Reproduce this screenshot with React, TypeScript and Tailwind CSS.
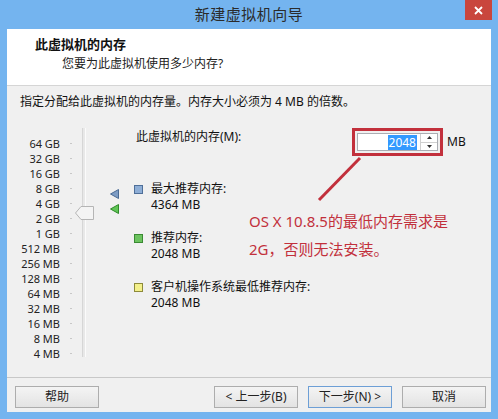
import React from "react";

const sizes = [
  "64 GB", "32 GB", "16 GB", "8 GB", "4 GB", "2 GB", "1 GB",
  "512 MB", "256 MB", "128 MB", "64 MB", "32 MB", "16 MB", "8 MB", "4 MB",
];

function Btn({ label, primary }: { label: string; primary?: boolean }) {
  return (
    <button
      className={`h-[22px] w-[84px] text-[12px] text-[#222] bg-gradient-to-b from-[#f4f4f4] to-[#e3e3e3] border ${
        primary ? "border-[#6d9fd6]" : "border-[#adadad]"
      }`}
    >
      {label}
    </button>
  );
}

export default function App() {
  return (
    <div
      className="w-[498px] h-[419px] bg-[#74b4ef] flex flex-col overflow-hidden"
      style={{ fontFamily: '"Noto Sans", "Noto Sans CJK SC", sans-serif' }}
    >
      {/* title bar */}
      <div className="relative h-[29px] flex items-center justify-center">
        <span className="text-[15px] text-[#2b2b2b] tracking-[0.5px]">新建虚拟机向导</span>
        <div className="absolute right-[6px] top-0 w-[27px] h-[20px] bg-[#c9463d] flex items-center justify-center">
          <svg width="9" height="9" viewBox="0 0 9 9">
            <path d="M1 1L8 8M8 1L1 8" stroke="#fff" strokeWidth="1.8" />
          </svg>
        </div>
      </div>

      <div className="mx-[7px] mb-[7px] flex-1 flex flex-col bg-[#f0f0f0]">
        {/* header */}
        <div className="h-[57px] bg-white border-b border-[#d5d5d5] pl-[28px] pt-[6px]">
          <div className="text-[13px] font-bold text-[#111] leading-[18px]">此虚拟机的内存</div>
          <div className="text-[12px] text-[#222] leading-[18px] pl-[27px] pt-[2px]">您要为此虚拟机使用多少内存?</div>
        </div>

        {/* body */}
        <div className="relative flex-1 flex flex-col">
          <div className="pl-[13px] pt-[7px] text-[12px] text-[#111] leading-[18px]">
            指定分配给此虚拟机的内存量。内存大小必须为 4 MB 的倍数。
          </div>

          <div className="flex mt-[17px]">
            {/* slider */}
            <div className="relative flex">
              <div className="w-[53px] flex flex-col pt-[8px]">
                {sizes.map((s) => (
                  <div key={s} className="h-[15px] leading-[15px] text-right text-[11px] text-[#222] whitespace-nowrap">
                    {s}
                  </div>
                ))}
              </div>
              <div className="w-[12px] flex flex-col pt-[8px]">
                {sizes.map((s) => (
                  <div key={s} className="h-[15px] flex items-center justify-end">
                    <div className="w-[2px] h-px bg-[#c8c8c8]" />
                  </div>
                ))}
              </div>
              <div className="ml-[10px] w-[4px] h-[229px] border-l border-[#d6d6d6] border-r border-r-[#fbfbfb] bg-[#e8e8e8]" />
              {/* thumb */}
              <svg className="absolute left-[68px] top-[78px]" width="19" height="14" viewBox="0 0 19 14">
                <path d="M0.5 7L6 0.5H18.5V13.5H6Z" fill="#f4f4f4" stroke="#b5b5b5" />
              </svg>
            </div>

            {/* markers */}
            <div className="relative w-[48px]">
              <svg className="absolute left-[24px] top-[61px]" width="9" height="10" viewBox="0 0 9 10">
                <path d="M0.5 5L8.5 0.5V9.5Z" fill="#7d9cc4" stroke="#4a6b94" />
              </svg>
              <svg className="absolute left-[24px] top-[76px]" width="9" height="10" viewBox="0 0 9 10">
                <path d="M0.5 5L8.5 0.5V9.5Z" fill="#5fc455" stroke="#2f8a2a" />
              </svg>
            </div>

            {/* info */}
            <div className="flex flex-col text-[12px] text-[#111]">
              <div className="pl-[2px] leading-[16px] pt-[1px]">此虚拟机的内存(M):</div>
              <div className="mt-[36px] flex flex-col gap-[17px]">
                {[
                  ["最大推荐内存:", "4364 MB", "bg-[#8eaed6] border-[#4f6f99]"],
                  ["推荐内存:", "2048 MB", "bg-[#6cc35f] border-[#3a8a33]"],
                  ["客户机操作系统最低推荐内存:", "2048 MB", "bg-[#f3f08a] border-[#8d8a3a]"],
                ].map(([t, v, c]) => (
                  <div key={t} className="flex">
                    <div className={`w-[9px] h-[9px] border mt-[4px] mr-[8px] ${c}`} />
                    <div className="flex flex-col leading-[16px]">
                      <span>{t}</span>
                      <span>{v}</span>
                    </div>
                  </div>
                ))}
              </div>
            </div>
          </div>

          {/* spin box with red annotation */}
          <div className="absolute left-[345px] top-[42px] flex items-center">
            <div className="border-[3px] border-[#c2303c] p-[2px]">
              <div className="w-[81px] h-[18px] bg-white border border-[#abadb3] flex items-center justify-end">
                <span className="bg-[#3399ff] text-white text-[12px] leading-[15px] px-[1px] mr-[3px]">2048</span>
                <div className="w-[17px] h-full border-l border-[#d0d0d0] flex flex-col">
                  <div className="flex-1 flex items-center justify-center border-b border-[#d0d0d0]">
                    <svg width="5" height="3" viewBox="0 0 5 3"><path d="M0 3L2.5 0L5 3Z" fill="#333" /></svg>
                  </div>
                  <div className="flex-1 flex items-center justify-center">
                    <svg width="5" height="3" viewBox="0 0 5 3"><path d="M0 0L2.5 3L5 0Z" fill="#333" /></svg>
                  </div>
                </div>
              </div>
            </div>
            <span className="ml-[4px] text-[12px] text-[#111]">MB</span>
          </div>
          <svg className="absolute left-[300px] top-[70px]" width="60" height="50" viewBox="0 0 60 50">
            <path d="M53 2L12 44" stroke="#c2303c" strokeWidth="3" />
          </svg>
          <div className="absolute left-[242px] top-[121px] text-[15px] text-[#c2303c] leading-[28px]">
            <div>OS X 10.8.5的最低内存需求是</div>
            <div>2G，否则无法安装。</div>
          </div>
        </div>

        {/* footer */}
        <div className="h-[35px] border-t border-[#c8c8c8] flex items-end pb-[4px] pl-[8px] pr-[5px]">
          <Btn label="帮助" />
          <div className="flex-1" />
          <div className="flex gap-[10px]">
            <Btn label="< 上一步(B)" />
            <Btn label="下一步(N) >" primary />
            <Btn label="取消" />
          </div>
        </div>
      </div>
    </div>
  );
}
